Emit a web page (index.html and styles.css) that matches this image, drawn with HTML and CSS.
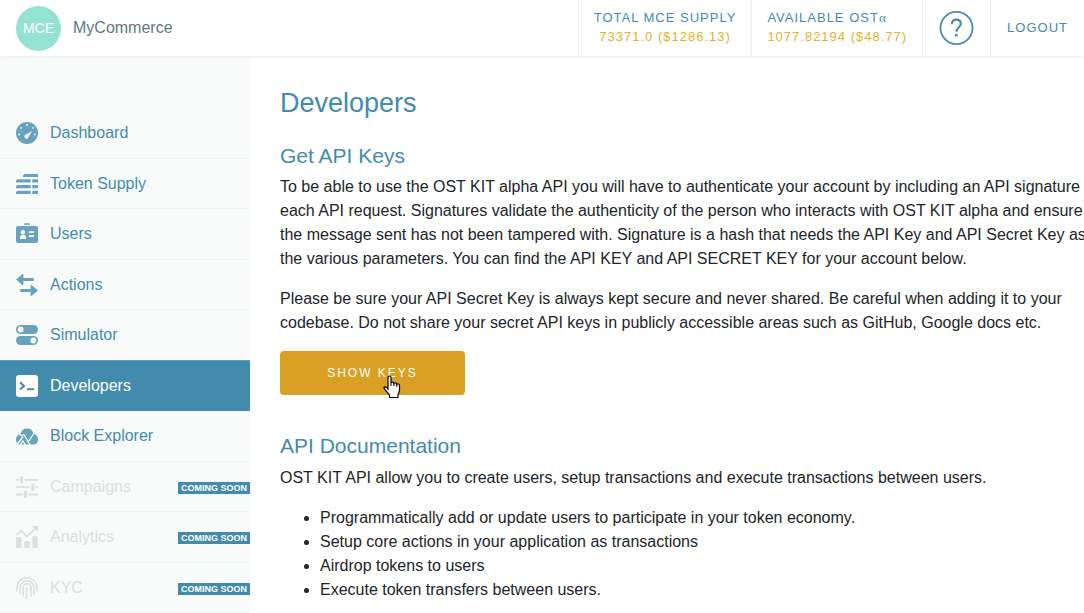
FILE: index.html
```html
<!DOCTYPE html>
<html lang="en">
<head>
<meta charset="utf-8">
<meta name="viewport" content="width=device-width, initial-scale=1">
<title>Developers - MyCommerce</title>
<link rel="stylesheet" href="styles.css">
</head>
<body>
<header class="topbar">
  <a class="brand" href="#"><span class="brand-badge">MCE</span><span class="brand-name">MyCommerce</span></a>
  <div class="stats">
    <div class="stat"><span class="stat-label">Total MCE Supply</span><span class="stat-value">73371.0 ($1286.13)</span></div>
    <div class="stat stat-left"><span class="stat-label">Available OST<span class="alpha">α</span></span><span class="stat-value">1077.82194 ($48.77)</span></div>
    <a class="help" href="#" aria-label="Help">
      <svg width="35" height="36" viewBox="0 0 36 36" fill="none" stroke="currentColor"><circle cx="18" cy="18" r="16.5" stroke-width="1.8"/><path d="M13.2 14.2c0-3 1.9-4.800 4.600-4.800s4.600 1.700 4.600 4.300c0 3.800-4.600 3.800-4.600 8.100" stroke-width="2.1"/><path d="M17.800 24v2.600" stroke-width="2.600"/></svg>
    </a>
    <a class="logout" href="#">Logout</a>
  </div>
</header>
<div class="layout">
  <nav class="sidebar">
    <ul class="menu">
      <li><a class="item" href="#"><svg class="icon" viewBox="0 0 22 22"><circle cx="11" cy="11" r="11"/><g class="cut"><circle cx="11" cy="3" r=".9"/><circle cx="5.200" cy="5.800" r=".9"/><circle cx="17" cy="5.800" r=".9"/><circle cx="3.200" cy="12.500" r=".9"/><circle cx="18.800" cy="12.500" r=".9"/><path d="M16.200 9l-3.600 5.800a2.100 2.100 0 1 1-2.600-2.300z"/></g></svg><span>Dashboard</span></a></li>
      <li><a class="item" href="#"><svg class="icon" viewBox="0 0 22 22"><path d="M9 1h13v3H7q0-3 2-3zM2 6.300h12.700v3.300H0V8.300q0-2 2-2zm14.300 0H22v3.300h-5.700zM2 12h12.700v3.300H0V14q0-2 2-2zm14.300 0H22v3.300h-5.700zM2 17.700h12.700V21H0v-1.300q0-2 2-2zm14.300 0H22V21h-5.700z"/></svg><span>Token Supply</span></a></li>
      <li><a class="item" href="#"><svg class="icon" viewBox="0 0 22 22"><path d="M8 1q0-.8 1-.8h4q1 0 1 .8v.8H8zM2 3h18a2 2 0 0 1 2 2v13a2 2 0 0 1-2 2H2a2 2 0 0 1-2-2V5a2 2 0 0 1 2-2z"/><g class="cut"><circle cx="7" cy="9.200" r="2.200"/><path d="M4 16v-2.300q0-1.700 2-1.700h2q2 0 2 1.700V16zM12.800 8.300H18v1.600h-5.200zM12.800 12.300H18v1.600h-5.200z"/></g></svg><span>Users</span></a></li>
      <li><a class="item" href="#"><svg class="icon" viewBox="0 0 22 22"><path d="M0 5.500L6.500 0q.9-.3.900.8V4H17q1 0 1 1.500T17 7H7.400v3.200q0 1.100-.9.800zM22 16.500l-6.500-5.500q-.9-.3-.9.800V15H5q-1 0-1 1.500T5 18h9.600v3.200q0 1.100.9.800z"/></svg><span>Actions</span></a></li>
      <li><a class="item" href="#"><svg class="icon" viewBox="0 0 22 22"><rect y="1" width="22" height="9" rx="4.500"/><rect y="12" width="22" height="9" rx="4.500"/><g class="cut"><circle cx="4.700" cy="5.500" r="2.900"/><circle cx="17.300" cy="16.500" r="2.900"/></g></svg><span>Simulator</span></a></li>
      <li><a class="item active" href="#" aria-current="page"><svg class="icon" viewBox="0 0 22 22"><rect width="22" height="22" rx="3"/><path d="M4 7.200l4 3.700-4 3.700M11 14.300h7" class="cut-line"/></svg><span>Developers</span></a></li>
      <li><a class="item" href="#"><svg class="icon" viewBox="0 0 22 22"><path d="M5 8.400a6.200 6 0 0 1 12.200 0c3 .8 4.800 3 4.800 6.100 0 3-1.800 5-4.200 5H4.200C1.800 19.500 0 18 0 14.700c0-3.500 1.800-5.500 5-6.300z"/><path class="block-lines" d="M3.200 9.500L5.500 10.500L8 9.500L14 20M1.500 19L7 11.500M4.500 20l2.400-4 2.600 4M17.800 8.500L12.300 17"/></svg><span>Block Explorer</span></a></li>
      <li><a class="item disabled" aria-disabled="true"><svg class="icon" viewBox="0 0 22 22"><path d="M0 3h22v1.800H0zM0 10.200h22V12H0zM0 17.600h22v1.800H0z"/><path class="cut" d="M2.800 2h6v4h-6zM14 9h5.500v4H14zM6.500 16h6v5h-6z"/><rect x="3.700" width="3.400" height="7.300" rx="1.500"/><rect x="15.200" y="7.400" width="3.400" height="7.300" rx="1.500"/><rect x="7.700" y="14.700" width="3.400" height="7.300" rx="1.500"/></svg><span>Campaigns</span><span class="soon">Coming Soon</span></a></li>
      <li><a class="item disabled" aria-disabled="true"><svg class="icon" viewBox="0 0 22 22"><path d="M.5 9L5 4.500l6 6.300 8-8" fill="none" stroke="currentColor" stroke-width="1.800"/><path d="M16 0h6v6z"/><rect y="11" width="5.500" height="11" rx="1.500"/><rect x="8.200" y="15" width="5.500" height="7" rx="1.500"/><rect x="16.300" y="10" width="5.500" height="12" rx="1.500"/></svg><span>Analytics</span><span class="soon">Coming Soon</span></a></li>
      <li><a class="item disabled" aria-disabled="true"><svg class="icon" viewBox="0 0 22 22"><path d="M1 14.500V11a10 10.200 0 0 1 20 0V14.500M4 17.500V11a7 7.200 0 0 1 14 0V17.500M7 19.500V11a4 4.200 0 0 1 8 0V19.500M9.700 22q1-1.500 1-4V10.500" fill="none" stroke="currentColor" stroke-width="1.600"/></svg><span>KYC</span><span class="soon">Coming Soon</span></a></li>
    </ul>
  </nav>
  <main class="content">
    <h1>Developers</h1>
    <section>
      <h2>Get API Keys</h2>
      <p>To be able to use the OST KIT alpha API you will have to authenticate your account by including an API signature<br>each API request. Signatures validate the authenticity of the person who interacts with OST KIT alpha and ensure<br>the message sent has not been tampered with. Signature is a hash that needs the API Key and API Secret Key as<br>the various parameters. You can find the API KEY and API SECRET KEY for your account below.</p>
      <p>Please be sure your API Secret Key is always kept secure and never shared. Be careful when adding it to your<br>codebase. Do not share your secret API keys in publicly accessible areas such as GitHub, Google docs etc.</p>
      <div class="action">
        <button class="show-keys" type="button">Show Keys</button>
        <svg class="pointer" width="18" height="24" viewBox="0 0 18 24" aria-hidden="true"><path d="M5 14V2.500C5 .5 8 .5 8 2.500V8c.5-1.300 2.800-1 3 .5.700-1 2.500-.6 2.800.8.900-.9 2.700-.4 2.700 1.200V15c0 2.500-1.500 3.500-1.500 5v2.500H6.500V20c-1-2-4.500-4.500-5.500-7 0-1.700 2-1.700 4 1z" fill="#fff" stroke="#000" stroke-width="1.200"/><path d="M8 8v3M11 8.500V11M13.800 9.500V12" fill="none" stroke="#000"/></svg>
      </div>
    </section>
    <section class="docs">
      <h2>API Documentation</h2>
      <p>OST KIT API allow you to create users, setup transactions and execute transactions between users.</p>
      <ul class="features">
        <li>Programmatically add or update users to participate in your token economy.</li>
        <li>Setup core actions in your application as transactions</li>
        <li>Airdrop tokens to users</li>
        <li>Execute token transfers between users.</li>
      </ul>
    </section>
  </main>
</div>
</body>
</html>
```
FILE: styles.css
```css
* { box-sizing: border-box; }
html { height: 100%; }
body {
  margin: 0;
  height: 100%;
  display: flex;
  flex-direction: column;
  overflow: hidden;
  font: 16px/24px "Liberation Sans", Arial, sans-serif;
  color: #212529;
  background: #fff;
}
a { color: inherit; text-decoration: none; }
ul { margin: 0; padding: 0; }

.topbar {
  position: relative;
  flex: none;
  display: flex;
  justify-content: space-between;
  height: 56px;
  background: #fff;
  color: #438bad;
  box-shadow: 0 1px 3px #e4edf3;
}
.brand { display: flex; align-items: center; gap: 12px; padding-left: 16px; color: #597a84; }
.brand-badge {
  display: flex;
  align-items: center;
  justify-content: center;
  width: 45px;
  height: 45px;
  border-radius: 50%;
  background: #94e2d1;
  color: #fff;
  font-size: 14px;
}
.stats { display: flex; }
.stats > * { border-left: 1px solid #e8eff3; padding: 0 16px; }
.stats > .stat {
  display: flex;
  flex-direction: column;
  justify-content: center;
  padding: 0 15px 2px;
  text-align: center;
  font-size: 13px;
  line-height: 19px;
  letter-spacing: 1px;
}
.stats > .stat-left { text-align: left; }
.stat-label { text-transform: uppercase; }
.alpha { text-transform: none; font-family: "Liberation Serif", serif; }
.stat-value { color: #e4b030; }
.help, .logout { display: flex; align-items: center; }
.logout { font-size: 13px; letter-spacing: 1px; text-transform: uppercase; }

.layout { flex: 1; display: flex; min-height: 0; }
.sidebar { flex: none; width: 250px; padding-top: 52px; background: #f9fbfa; overflow: hidden; }
.menu { list-style: none; }
.item {
  display: flex;
  align-items: center;
  gap: 12px;
  padding: 13px 0 13px 16px;
  border-bottom: 1px solid #e8f5f3;
  color: #438bad;
}
.menu li:nth-child(even) .item { padding-bottom: 12px; }
.icon { flex: none; width: 22px; height: 22px; color: #69a2bd; fill: currentColor; }
.cut { fill: #f9fbfa; }
.cut-line { fill: none; stroke: #438bad; stroke-width: 2; }
.block-lines { fill: none; stroke: #f9fbfa; stroke-width: 1.3; }
.item.active { background: #438bad; border-color: #438bad; color: #fff; box-shadow: 0 -1px #5b9ebb; }
.active .icon { color: #fff; }
.disabled, .disabled .icon { color: #dce0de; }
.soon {
  margin: 2px 0 0 auto;
  padding: 0 3px;
  background: #438bad;
  color: #fff;
  font-size: 9px;
  font-weight: bold;
  line-height: 12px;
  text-transform: uppercase;
}

.content { flex: 1; min-width: 0; padding: 29px 0 0 30px; overflow: hidden; white-space: nowrap; }
h1, h2 { margin: 0; color: #438bad; font-weight: normal; }
h1 { font-size: 27px; line-height: 36px; }
h2 { font-size: 21px; line-height: 30px; margin: 20px 0 4px; }
p { margin: 0 0 16px; }
.action { position: relative; width: 185px; }
.show-keys {
  display: block;
  width: 100%;
  height: 44px;
  border: 0;
  border-radius: 4px;
  background: #daa024;
  color: #fff;
  font: 12px "Liberation Sans", Arial, sans-serif;
  letter-spacing: 2px;
  text-transform: uppercase;
}
.pointer { position: absolute; left: 103px; top: 24px; }
.docs h2 { margin: 36px 0 5px; }
.features { padding-left: 40px; }
```
